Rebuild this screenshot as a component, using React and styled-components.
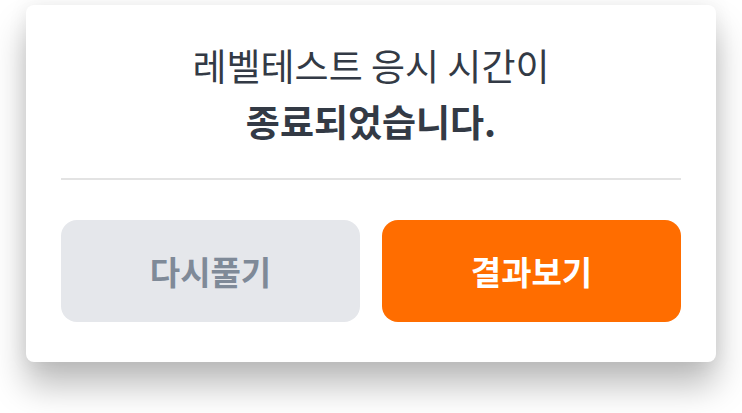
import React from "react";
import styled, { createGlobalStyle } from "styled-components";

const GlobalStyle = createGlobalStyle`
  html, body {
    margin: 0;
    background: #ffffff;
    font-family: "Noto Sans CJK KR", "Noto Sans", sans-serif;
  }
`;

const Page = styled.div`
  min-height: 413px;
  box-sizing: border-box;
  padding: 5px 26px 0 26px;
`;

const Card = styled.div`
  width: 690px;
  box-sizing: border-box;
  padding: 32px 35px 40px;
  background: #ffffff;
  border-radius: 8px;
  box-shadow: 0 24px 34px rgba(0, 0, 0, 0.26), 0 0 20px rgba(0, 0, 0, 0.07);
`;

const Message = styled.div`
  text-align: center;
  font-size: 37px;
  line-height: 56px;
  color: #333a45;
`;

const Line = styled.p`
  margin: 0;
  font-weight: ${(props) => (props.bold ? 700 : 400)};
`;

const Divider = styled.hr`
  margin: 29px 0 40px;
  border: 0;
  height: 2px;
  background: #e3e3e3;
`;

const Actions = styled.div`
  display: grid;
  grid-template-columns: 1fr 1fr;
  gap: 22px;
`;

const Button = styled.button`
  height: 102px;
  border: 0;
  border-radius: 16px;
  font-family: inherit;
  font-size: 33px;
  font-weight: 700;
  cursor: pointer;
  background: ${(props) => (props.primary ? "#ff6d00" : "#e5e7eb")};
  color: ${(props) => (props.primary ? "#ffffff" : "#7f8a98")};
`;

const App = () => {
  return (
    <React.Fragment>
      <GlobalStyle />
      <Page>
        <Card>
          <Message>
            <Line>레벨테스트 응시 시간이</Line>
            <Line bold>종료되었습니다.</Line>
          </Message>
          <Divider />
          <Actions>
            <Button>다시풀기</Button>
            <Button primary>결과보기</Button>
          </Actions>
        </Card>
      </Page>
    </React.Fragment>
  );
};

export default App;
